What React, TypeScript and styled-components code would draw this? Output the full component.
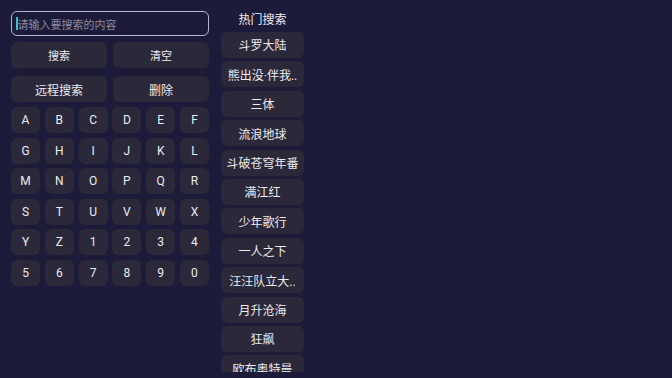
import React from "react";
import styled, { createGlobalStyle } from "styled-components";

const Global = createGlobalStyle`
  html, body { margin: 0; padding: 0; background: #1d1b3a; width: 672px; height: 378px; overflow: hidden; }
  * { box-sizing: border-box; }
`;

const Page = styled.div`
  display: flex;
  align-items: stretch;
  gap: 12px;
  padding: 11px 11px 6px;
  width: 672px;
  height: 378px;
  overflow: hidden;
  background: #1d1b3a;
  font-family: Roboto, "Noto Sans CJK SC", sans-serif;
  color: #ececf2;
`;

const LeftCol = styled.div`
  width: 198px;
  display: flex;
  flex-direction: column;
`;

const SearchBox = styled.div`
  height: 25px;
  border: 1.5px solid #b8b5cb;
  border-radius: 6px;
  display: flex;
  align-items: center;
  padding-left: 4px;
  font-size: 11px;
  color: #8c8a9e;
`;

const Caret = styled.span`
  width: 1.5px;
  height: 13px;
  background: #2ec4d6;
`;

const ActionRow = styled.div<{ $top: number }>`
  display: grid;
  grid-template-columns: 1fr 1fr;
  gap: 6px;
  margin-top: ${(p) => p.$top}px;
`;

const Btn = styled.div<{ $size: number }>`
  height: 26px;
  border-radius: 6px;
  background: #2a2839;
  display: flex;
  align-items: center;
  justify-content: center;
  font-size: ${(p) => p.$size}px;
`;

const Keys = styled.div`
  display: grid;
  grid-template-columns: repeat(6, 1fr);
  grid-auto-rows: 26px;
  column-gap: 4.8px;
  row-gap: 4.6px;
  margin-top: 5px;
`;

const Key = styled.div`
  border-radius: 6px;
  background: #2a2839;
  display: flex;
  align-items: center;
  justify-content: center;
  font-size: 12px;
`;

const RightCol = styled.div`
  width: 83px;
  display: flex;
  flex-direction: column;
  gap: 3.4px;
  overflow: hidden;
`;

const Title = styled.div`
  flex: none;
  height: 17.6px;
  text-align: center;
  font-size: 12px;
  line-height: 16px;
  padding-top: 0.5px;
`;

const Hot = styled.div`
  flex: none;
  height: 26px;
  border-radius: 6px;
  background: #2a2839;
  display: flex;
  align-items: center;
  justify-content: center;
  font-size: 12px;
  white-space: nowrap;
`;

const keys = "ABCDEFGHIJKLMNOPQRSTUVWXYZ1234567890".split("");
const hots = [
  "斗罗大陆",
  "熊出没·伴我..",
  "三体",
  "流浪地球",
  "斗破苍穹年番",
  "满江红",
  "少年歌行",
  "一人之下",
  "汪汪队立大..",
  "月升沧海",
  "狂飙",
  "欧布奥特曼",
];

export default function App() {
  return (
    <Page>
      <Global />
      <LeftCol>
        <SearchBox>
          <Caret />
          <span>请输入要搜索的内容</span>
        </SearchBox>
        <ActionRow $top={6}>
          <Btn $size={11}>搜索</Btn>
          <Btn $size={11}>清空</Btn>
        </ActionRow>
        <ActionRow $top={8}>
          <Btn $size={12}>远程搜索</Btn>
          <Btn $size={12}>删除</Btn>
        </ActionRow>
        <Keys>
          {keys.map((k) => (
            <Key key={k}>{k}</Key>
          ))}
        </Keys>
      </LeftCol>
      <RightCol>
        <Title>热门搜索</Title>
        {hots.map((h) => (
          <Hot key={h}>{h}</Hot>
        ))}
      </RightCol>
    </Page>
  );
}
